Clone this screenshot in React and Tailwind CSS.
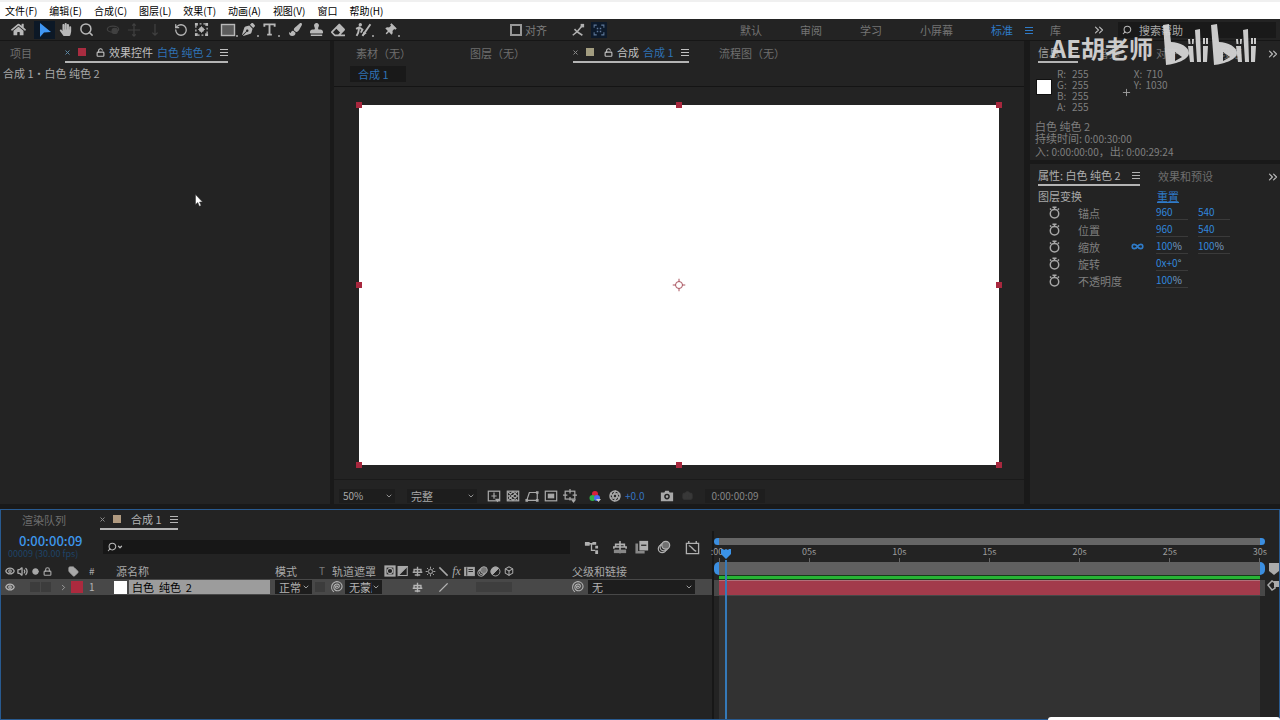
import React from 'react'
import {
  Search, Lock, LockOpen, Eye, Volume2, Circle, Tag, ChevronDown, ChevronRight,
  ChevronsRight, RotateCcw, Aperture, Camera, Box, Plus
} from 'lucide-react'
import { FaHome, FaHandPaper, FaPaintBrush, FaStamp, FaEraser, FaThumbtack, FaPenNib } from 'react-icons/fa'

const menus = ['文件(F)', '编辑(E)', '合成(C)', '图层(L)', '效果(T)', '动画(A)', '视图(V)', '窗口', '帮助(H)']

const workspaces = ['默认', '审阅', '学习', '小屏幕']

const Svg = ({ size = 14, className = '', children }) => (
  <svg
    width={size}
    height={size}
    viewBox="0 0 16 16"
    fill="none"
    stroke="currentColor"
    strokeWidth="1.4"
    className={className}
    aria-hidden="true"
  >
    {children}
  </svg>
)

const ArrowIcon = () => (
  <Svg size={16}><path d="M3 1v14l4-4.5 7-.5z" fill="#3f97f5" stroke="none" /></Svg>
)

const OrbitIcon = () => (
  <Svg>
    <ellipse cx="8" cy="7" rx="6.5" ry="3.5" />
    <circle cx="10" cy="9" r="3" fill="currentColor" />
  </Svg>
)

const MoveIcon = () => (
  <Svg><path d="M8 1v14M1 8h14M6 3l2-2 2 2M6 13l2 2 2-2" /></Svg>
)

const DollyIcon = () => (
  <Svg><path d="M8 1v12M5 11l3 3 3-3" /></Svg>
)

const AnchorIcon = () => (
  <Svg size={15}>
    <rect x="2" y="2" width="12" height="12" strokeDasharray="2 2" />
    <path d="M8 4.500v7M4.500 8h7" strokeWidth="1" />
    <circle cx="8" cy="8" r="2" fill="currentColor" />
    <path d="M1 1h3v3H1zM12 1h3v3h-3zM1 12h3v3H1zM12 12h3v3h-3z" fill="currentColor" stroke="none" />
  </Svg>
)

const RectIcon = () => (
  <Svg size={16}><rect x="1.5" y="2.5" width="13" height="11" fill="#5c5c5c" /></Svg>
)

const TextIcon = () => (
  <Svg size={15}><path d="M2.5 5V2.5h11V5M8 2.5v11M5.5 13.5h5" strokeWidth="2" /></Svg>
)

const RotoIcon = () => (
  <Svg size={17}>
    <circle cx="5" cy="3.5" r="1.6" fill="currentColor" stroke="none" />
    <path d="M1 7.5l3-1.5 3 2-1.5 3M4 6l-1 5-1.5 3M7 14L14.5 3" strokeWidth="1.8" />
    <path d="M7 14l1-4 3 1.5z" fill="currentColor" stroke="none" />
  </Svg>
)

const toolGroups = [
  [{ name: '主页', icon: <FaHome size={15} /> }],
  [
    { name: '选取工具', icon: <ArrowIcon />, active: true },
    { name: '手形工具', icon: <FaHandPaper size={13} /> },
    { name: '缩放工具', icon: <Search size={15} strokeWidth={2.4} /> }
  ],
  [
    { name: '环绕工具', icon: <OrbitIcon />, dim: true },
    { name: '平移工具', icon: <MoveIcon />, dim: true },
    { name: '推拉工具', icon: <DollyIcon />, dim: true }
  ],
  [
    { name: '旋转工具', icon: <RotateCcw size={14} strokeWidth={2.2} /> },
    { name: '锚点工具', icon: <AnchorIcon /> }
  ],
  [
    { name: '矩形工具', icon: <RectIcon />, more: true },
    { name: '钢笔工具', icon: <FaPenNib size={13} />, more: true },
    { name: '文字工具', icon: <TextIcon />, more: true }
  ],
  [
    { name: '画笔工具', icon: <FaPaintBrush size={13} /> },
    { name: '仿制图章工具', icon: <FaStamp size={13} /> },
    { name: '橡皮擦工具', icon: <FaEraser size={14} /> }
  ],
  [{ name: 'Roto 笔刷工具', icon: <RotoIcon />, more: true }],
  [{ name: '人偶位置控点工具', icon: <FaThumbtack size={12} className="rotate-45" />, more: true }]
]

const MenuLines = ({ className = '' }) => (
  <svg width="8" height="8" viewBox="0 0 8 8" stroke="currentColor" className={`shrink-0 ${className}`} aria-hidden="true">
    <path d="M0 1.5h8M0 4.5h8M0 7.5h8" />
  </svg>
)

const PanelTab = ({ className = '', children }) => (
  <button className={`flex h-5 items-center border-b-2 border-[#b4b4b4] whitespace-nowrap ${className}`}>
    {children}
  </button>
)

const CloseMark = ({ className = '' }) => (
  <svg width="5" height="5" viewBox="0 0 5 5" stroke="currentColor" className={`shrink-0 ${className}`} aria-hidden="true">
    <path d="M.500.500l4 4M4.500.500l-4 4" />
  </svg>
)

const IdleTab = ({ className = '', children }) => (
  <button className={`h-5 whitespace-nowrap text-[#6f6f6f] ${className}`}>{children}</button>
)

const MenuBar = () => (
  <nav className="flex h-[19px] shrink-0 items-center gap-3 border-t-2 border-[#f0f0f0] bg-white pl-[5px] text-[10px] text-black">
    {menus.map((menu) => (
      <button key={menu} className="whitespace-nowrap">{menu}</button>
    ))}
  </nav>
)

const Toolbar = () => (
  <div className="flex h-[22px] shrink-0 items-center border-b border-[#161616] bg-[#232323] pl-2">
    <div className="flex gap-[5px]">
      {toolGroups.map((group) => (
        <div key={group[0].name} className="flex">
          {group.map((tool) => (
            <button
              key={tool.name}
              aria-label={tool.name}
              className={`relative flex h-[18px] w-[21px] items-center justify-center ${tool.active ? 'bg-[#0c1826]' : ''} ${tool.dim ? 'text-[#414141]' : 'text-[#b8b8b8]'}`}
            >
              {tool.icon}
              {tool.more && <span className="absolute right-0 bottom-0.5 size-0.5 bg-[#8a8a8a]" />}
            </button>
          ))}
        </div>
      ))}
    </div>
    <label className="ml-[110px] flex items-center gap-[3px] text-[#7d7d7d]">
      <input type="checkbox" className="size-3 appearance-none border-2 border-[#989898]" />
      对齐
    </label>
    <div className="ml-6 flex items-center gap-1.5">
      <button aria-label="对齐边缘" className="text-[#b0b0b0]">
        <Svg>
          <path d="M2 14l5-4 6 4M7 10L4 7M7 10l5-6" strokeWidth="1.800" />
          <path d="M11 1h4v4h-4z" fill="currentColor" stroke="none" />
        </Svg>
      </button>
      <button aria-label="对齐折叠" className="flex size-4 items-center justify-center bg-[#0d1a2b] text-[#5f7899]">
        <Svg size={12}>
          <path d="M1.500 5V1.500H5M11 1.500h3.500V5M14.500 11v3.500H11M5 14.500H1.500V11" />
          <path d="M5 5h2v2H5zM9 5h2v2H9zM5 9h2v2H5zM9 9h2v2H9z" fill="currentColor" stroke="none" />
        </Svg>
      </button>
    </div>
    <div className="ml-auto flex items-center text-[#747474]">
      <div className="flex items-center gap-[38px]">
        {workspaces.map((name) => (
          <button key={name}>{name}</button>
        ))}
        <button className="flex items-center gap-3 text-[#2f7bc8]">
          标准
          <MenuLines />
        </button>
      </div>
      <button className="ml-[17px]">库</button>
      <button aria-label="更多工作区" className="ml-[31px] text-[#b8b8b8]">
        <ChevronsRight size={14} />
      </button>
      <label className="mr-1 ml-3 flex h-4 w-[158px] items-center gap-[7px] bg-[#191919] px-1">
        <Search size={10} strokeWidth={2.5} className="shrink-0 -scale-x-100 text-[#b8b8b8]" />
        <input
          aria-label="搜索帮助"
          placeholder="搜索帮助"
          className="w-full min-w-0 bg-transparent placeholder:text-[#a8a8a8] focus:outline-none"
        />
      </label>
    </div>
  </div>
)

const EffectControls = () => (
  <section className="relative w-[330px] shrink-0 bg-[#232323]">
    <div className="flex h-[23px] items-start pt-0.5 pl-2.5">
      <IdleTab>项目</IdleTab>
      <PanelTab className="ml-[33px] w-[163px] text-[#c0c0c0]">
        <CloseMark className="text-[#5b87a5]" />
        <span className="ml-2 size-2 shrink-0 bg-[#a82c40]" />
        <LockOpen size={9} strokeWidth={3} className="mr-1 ml-2.5 shrink-0" />
        效果控件
        <span className="ml-1 text-[#2f72b4]">白色 纯色 2</span>
        <MenuLines className="ml-auto" />
      </PanelTab>
    </div>
    <p className="pl-[3px] leading-[18px] text-[#a8a8a8]">合成 1・白色 纯色 2</p>
    {/* mouse pointer */}
    <svg width="8" height="13" viewBox="0 0 8 13" className="absolute top-[153px] left-[195px]" aria-hidden="true">
      <path d="M.5.5v10l2.300-2 1.500 3.800 1.800-.8-1.600-3.500H7.500z" fill="#fff" stroke="#333" strokeWidth=".5" />
    </svg>
  </section>
)

const handles = [
  '-top-[3px] -left-[3px]',
  '-top-[3px] left-1/2 -translate-x-1/2',
  '-top-[3px] -right-[3px]',
  'top-1/2 -left-[3px] -translate-y-1/2',
  'top-1/2 -right-[3px] -translate-y-1/2',
  '-bottom-[3px] -left-[3px]',
  '-bottom-[3px] left-1/2 -translate-x-1/2',
  '-bottom-[3px] -right-[3px]'
]

const viewIcons = [
  { name: '快速预览', path: <><rect x="1.500" y="2.500" width="13" height="11" /><path d="M8 4v7M5 8h6" /><path d="M9 11h6l-3 4z" fill="currentColor" stroke="none" /></> },
  { name: '透明网格', path: <><rect x="1.500" y="2.500" width="13" height="11" /><path d="M2 3l11 10M13 3L2 13M8 3l5 5-5 5-5-5z" /></> },
  { name: '蒙版可见性', path: <><path d="M2 13L5 4h9v9z" /><path d="M.500 11.500h3v3h-3zM12.500 11.500h3v3h-3zM12.500 2.500h3v3h-3z" fill="currentColor" stroke="none" /></> },
  { name: '目标区域', path: <><rect x="1.500" y="2.500" width="13" height="11" /><rect x="5" y="6" width="6" height="4" fill="currentColor" /></> },
  { name: '网格和参考线', path: <><rect x="2.500" y="2.500" width="11" height="9" /><path d="M8 0v5M8 9v4M0 7h5M11 7h5" /><path d="M9 12h6l-3 4z" fill="currentColor" stroke="none" /></> }
]

const SelectBox = ({ label, value, className = '' }) => (
  <div className={`relative flex items-center bg-[#1d1d1d] ${className}`}>
    <select aria-label={label} className="w-full appearance-none overflow-hidden bg-transparent pr-2.5 pl-1 leading-[14px] focus:outline-none">
      <option>{value}</option>
    </select>
    <ChevronDown size={8} strokeWidth={2.5} className="pointer-events-none absolute right-0.5" />
  </div>
)

const Viewer = () => (
  <section className="flex min-w-0 flex-1 flex-col bg-[#232323]">
    <div className="flex h-[23px] items-start pt-0.5 pl-[22px]">
      <IdleTab>素材（无）</IdleTab>
      <IdleTab className="ml-[59px]">图层（无）</IdleTab>
      <PanelTab className="ml-12 w-[116px] text-[#c0c0c0]">
        <CloseMark className="text-[#8a8a8a]" />
        <span className="ml-2 size-2 shrink-0 bg-[#a39d80]" />
        <LockOpen size={9} strokeWidth={3} className="mr-1 ml-2.5 shrink-0" />
        合成
        <span className="ml-1 text-[#2f72b4]">合成 1</span>
        <MenuLines className="ml-auto" />
      </PanelTab>
      <IdleTab className="ml-[30px]">流程图（无）</IdleTab>
    </div>
    <div className="h-[23px] border-b border-[#141414] pt-0.5 pl-4">
      <button className="block h-4 w-14 bg-[#191919] pl-2 text-left leading-4 text-[#2f72b4]">合成 1</button>
    </div>
    <div className="px-[25px] pt-[18px] pb-3.5">
      <div className="relative aspect-video bg-white">
        {handles.map((pos) => (
          <span key={pos} className={`absolute size-1.5 bg-[#a8283e] ${pos}`} />
        ))}
        <svg
          width="13"
          height="13"
          viewBox="0 0 13 13"
          fill="none"
          stroke="#a8505c"
          className="absolute top-1/2 left-1/2 -translate-x-1/2 -translate-y-1/2"
          aria-hidden="true"
        >
          <circle cx="6.500" cy="6.500" r="3.500" />
          <path d="M6.500 0v3M6.500 10v3M0 6.500h3M10 6.500h3" />
        </svg>
      </div>
    </div>
    <div className="flex h-[25px] items-center border-t border-[#1a1a1a] pt-[7px] pl-[5px] text-[#a8a8a8]">
      <SelectBox label="放大率" value="50%" className="w-14 text-[10px]" />
      <SelectBox label="分辨率" value="完整" className="ml-3 w-[70px]" />
      <div className="ml-2.5 flex gap-[5px]">
        {viewIcons.map((icon) => (
          <button key={icon.name} aria-label={icon.name}><Svg size={14}>{icon.path}</Svg></button>
        ))}
      </div>
      <button aria-label="通道" className="ml-3">
        <svg width="12" height="12" viewBox="0 0 12 12" aria-hidden="true">
          <circle cx="6" cy="4" r="3" fill="#d8203c" />
          <circle cx="3.500" cy="8" r="3" fill="#30b048" />
          <circle cx="8" cy="8" r="3" fill="#4a6cf0" />
          <path d="M7 9h5l-2.500 3z" fill="#ccc" />
        </svg>
      </button>
      <button aria-label="重置曝光度" className="ml-2"><Aperture size={12} strokeWidth={3} /></button>
      <button className="ml-1 text-[10px] text-[#3573c0]">+0.0</button>
      <button aria-label="拍摄快照" className="ml-4">
        <Svg size={14}>
          <path fillRule="evenodd" d="M1 4h4l1-2h4l1 2h4v10H1zM8 5.500a3.200 3.200 0 100 6.400 3.200 3.200 0 000-6.400zM8 7.200a1.500 1.500 0 110 3 1.500 1.500 0 010-3z" fill="currentColor" stroke="none" />
        </Svg>
      </button>
      <button aria-label="显示快照" className="ml-2 text-[#383838]"><Camera size={11} fill="currentColor" /></button>
      <button className="ml-3 bg-[#1e1e1e] px-1.5 text-[10px] leading-[14px] text-[#868686]">0:00:00:09</button>
    </div>
  </section>
)

const channels = [
  ['R', '255'],
  ['G', '255'],
  ['B', '255'],
  ['A', '255']
]

const InfoPanel = () => (
  <section className="h-[119px] bg-[#232323]">
    <div className="flex h-[23px] items-start pt-0.5 pl-2 text-[#6f6f6f]">
      <PanelTab className="w-10 text-[#a0a0a0]">
        信息
        <MenuLines className="ml-auto" />
      </PanelTab>
      <IdleTab className="ml-5">音频</IdleTab>
      <IdleTab className="ml-9">对齐</IdleTab>
      <IdleTab className="ml-auto">段落</IdleTab>
      <button aria-label="更多面板" className="mt-1 ml-6 text-[#b8b8b8]"><ChevronsRight size={14} /></button>
    </div>
    <div className="flex pl-1.5 text-[10px] leading-[11px] text-[#7f7f7f]">
      <span className="mt-[15px] size-4 border border-[#111] bg-white" />
      <dl className="mt-1 ml-[5px]">
        {channels.map(([name, value]) => (
          <div key={name} className="flex">
            <dt className="w-[15px]">{name}:</dt>
            <dd>{value}</dd>
          </div>
        ))}
      </dl>
      <Plus size={11} strokeWidth={2} className="mt-[23px] ml-8 text-[#a0a0a0]" />
      <dl className="mt-1 ml-0.5">
        <div className="flex gap-1"><dt>X:</dt><dd>710</dd></div>
        <div className="flex gap-1"><dt>Y:</dt><dd>1030</dd></div>
      </dl>
    </div>
    <div className="pt-2 pl-[5px] text-[#7f7f7f]">
      <p className="leading-3">白色 纯色 2</p>
      <p className="leading-3">持续时间: <span className="text-[10px]">0:00:30:00</span></p>
      <p className="leading-3">入: <span className="text-[10px]">0:00:00:00</span>，出: <span className="text-[10px]">0:00:29:24</span></p>
    </div>
  </section>
)

const transforms = [
  { name: '锚点', values: ['960', '540'] },
  { name: '位置', values: ['960', '540'] },
  { name: '缩放', values: ['100', '100'], unit: '%', linked: true },
  { name: '旋转', values: ['0x+0'], unit: '°' },
  { name: '不透明度', values: ['100'], unit: '%' }
]

const Stopwatch = () => (
  <Svg size={13}>
    <circle cx="8" cy="9.500" r="5.200" strokeWidth="1.800" />
    <path d="M8 4V1.500M5.500 1.500h5M12 4.500l1.500-1.500M4 4.500L2.500 3" strokeWidth="1.800" />
  </Svg>
)

const PropertiesPanel = () => (
  <section className="flex-1 bg-[#232323]">
    <div className="flex h-[23px] items-start pt-0.5 pl-2">
      <PanelTab className="w-[102px] text-[#b0b0b0]">
        属性: 白色 纯色 2
        <MenuLines className="ml-auto" />
      </PanelTab>
      <IdleTab className="ml-[18px]">效果和预设</IdleTab>
      <button aria-label="更多面板" className="mt-1 ml-auto text-[#b8b8b8]"><ChevronsRight size={14} /></button>
    </div>
    <div className="flex h-[17px] items-center pl-2 text-[#a8a8a8]">
      <h2 className="w-[119px]">图层变换</h2>
      <button className="text-[#2f7bc8] underline">重置</button>
    </div>
    {transforms.map((row) => (
      <div key={row.name} className="flex h-[17px] items-center pl-[18px] text-[#7f7f7f]">
        <button aria-label={`${row.name}关键帧`} className="text-[#a8a8a8]"><Stopwatch /></button>
        <span className="ml-[17px] w-[53px]">{row.name}</span>
        <span className="flex w-[25px] text-[#2f7bc8]">
          {row.linked && (
            <Svg size={13}><path d="M8 8C6 4.500 1.500 4.500 1.500 8S6 11.500 8 8s6.500-3.500 6.500 0S10 11.500 8 8z" strokeWidth="2" /></Svg>
          )}
        </span>
        {row.values.map((value, i) => (
          <button key={i} className="mr-2.5 w-8 border-b border-[#3a3a3a] text-left text-[10px] leading-[14px] text-[#3186dc]">
            {value}
            <span className="text-[#7da0c0]">{row.unit}</span>
          </button>
        ))}
      </div>
    ))}
  </section>
)

const switchIcons = [
  { name: '消隐', path: <path d="M1 9h14M3 9V5h10v4M8 1v14M4 13h8" strokeWidth="2" /> },
  { name: '折叠变换', path: <><circle cx="8" cy="8" r="3" /><path d="M8 1v3M8 12v3M1 8h3M12 8h3M3 3l2 2M13 13l-2-2M13 3l-2 2M3 13l2-2" /></> },
  { name: '质量和采样', path: <path d="M2 2l12 12" strokeWidth="2.200" /> },
  { name: '效果', text: 'fx' },
  { name: '帧混合', path: <><rect x="1" y="2" width="14" height="12" fill="currentColor" /><path d="M4 2v12M6.500 8H13M6.500 5H13" stroke="#232323" /></> },
  { name: '运动模糊', path: <><circle cx="6" cy="10" r="5" /><circle cx="8" cy="8" r="5" /><circle cx="10" cy="6" r="5" fill="#777" /></> },
  { name: '调整图层', path: <><circle cx="8" cy="8" r="6.500" /><path d="M3.400 12.600A6.500 6.500 0 0112.600 3.400z" fill="currentColor" /></> },
  { name: '3D 图层', box: true }
]

const Spiral = () => (
  <Svg size={12} className="shrink-0"><path d="M9 8a1.500 1.500 0 10-1.500 1.800C10 9.800 11.500 8 11 6S7.500 3.500 5.500 5 3 10 5.500 12s7 1 8.500-2 .5-7-3-8.500-8-.5-9.500 3.500 0 8 2.500 9.500" /></Svg>
)

const LayerTable = () => (
  <table className="w-full table-fixed border-collapse text-left">
    <colgroup>
      <col className="w-[56px]" />
      <col className="w-[28px]" />
      <col className="w-[28px]" />
      <col className="w-[157px]" />
      <col className="w-[43px]" />
      <col className="w-[16px]" />
      <col className="w-[55px]" />
      <col className="w-[28px]" />
      <col className="w-[158px]" />
      <col />
    </colgroup>
    <thead className="text-[#a8a8a8]">
      <tr className="h-4 leading-4">
        <th className="p-0">
          <span className="flex items-center gap-0.5 pl-1">
            <Eye size={10} strokeWidth={3} />
            <Volume2 size={11} strokeWidth={3} />
            <Circle size={7} fill="currentColor" className="mx-0.5" />
            <Lock size={9} strokeWidth={3} />
          </span>
        </th>
        <th className="p-0 pl-[11px]"><Tag size={11} fill="currentColor" /></th>
        <th className="p-0 pl-1 text-[10px] font-normal">#</th>
        <th className="p-0 pl-[3px] font-normal">源名称</th>
        <th className="p-0 pl-[5px] font-normal">模式</th>
        <th className="p-0 pl-1.5 text-[10px] font-normal text-[#7a7a7a]">T</th>
        <th className="p-0 pl-[3px] font-normal whitespace-nowrap">轨道遮罩</th>
        <th className="p-0">
          <span className="flex">
            <Svg size={12}><rect x="2" y="2" width="12" height="12" strokeWidth="3" /><circle cx="8" cy="8" r="3.500" fill="#232323" stroke="currentColor" /></Svg>
            <Svg size={12}><rect x="3" y="2" width="12" height="12" /><path d="M3 2h12l-4 4-4 4-4 4z" fill="currentColor" /></Svg>
          </span>
        </th>
        <th className="p-0">
          <span className="flex items-center gap-0.5">
            {switchIcons.map((icon) => (
              <span key={icon.name} title={icon.name} className="flex w-[11px] justify-center">
                {icon.text && <span className="font-['Liberation_Serif',serif] text-xs leading-3 font-normal italic">{icon.text}</span>}
                {icon.box && <Box size={10} strokeWidth={2.500} />}
                {icon.path && <Svg size={11} className="shrink-0">{icon.path}</Svg>}
              </span>
            ))}
          </span>
        </th>
        <th className="p-0 pl-0.5 font-normal">父级和链接</th>
      </tr>
    </thead>
    <tbody>
      <tr className="h-4 bg-[#484848] leading-4 text-[#b4b4b4]">
        <td className="p-0">
          <span className="flex items-center gap-px pl-1">
            <Eye size={10} strokeWidth={3} />
            <span className="ml-3.5 h-2.5 w-2.5 bg-[#3c3c3c]" />
            <span className="h-2.5 w-2.5 bg-[#3c3c3c]" />
          </span>
        </td>
        <td className="p-0">
          <span className="flex items-center">
            <ChevronRight size={9} className="mx-0.5" />
            <span className="ml-px size-3 bg-[#ac2a3e]" />
          </span>
        </td>
        <td className="p-0 pl-1 text-[10px]">1</td>
        <td className="p-0">
          <span className="flex items-center">
            <span className="mr-0.5 ml-px size-[13px] bg-white" />
            <button className="h-[14px] flex-1 bg-[#9c9c9c] pl-[3px] text-left leading-[14px] text-black">白色&nbsp; 纯色&nbsp; 2</button>
          </span>
        </td>
        <td className="p-0 pl-[5px]"><SelectBox label="模式" value="正常" className="w-[37px]" /></td>
        <td className="p-0"><span className="ml-0.5 block h-2.5 w-2.5 bg-[#3c3c3c]" /></td>
        <td className="p-0">
          <span className="flex items-center justify-end gap-0.5 pr-0.5">
            <Spiral />
            <SelectBox label="轨道遮罩" value="无蒙版" className="w-[37px]" />
          </span>
        </td>
        <td className="p-0" />
        <td className="p-0">
          <span className="flex items-center">
            <Svg size={11}>{switchIcons[0].path}</Svg>
            <Svg size={11} className="ml-[15px]"><path d="M2 14L14 2" strokeWidth="2" /></Svg>
            <span className="ml-[27px] h-2.5 w-9 bg-[#3e3e3e]" />
          </span>
        </td>
        <td className="p-0">
          <span className="flex items-center gap-1 pl-0.5">
            <Spiral />
            <SelectBox label="父级和链接" value="无" className="mr-[17px] flex-1" />
          </span>
        </td>
      </tr>
    </tbody>
  </table>
)

const ticks = [':00s', '05s', '10s', '15s', '20s', '25s', '30s']

const duration = 30
const currentTime = 0.4

const TimeGraph = () => (
  <div className="flex min-w-0 flex-1 border-l-2 border-[#171717]">
    <div className="relative flex min-w-0 flex-1 flex-col pt-[7px]">
      {/* time navigator */}
      <div className="flex h-[7px]">
        <span className="w-[5px] rounded-l-full bg-[#3b8ee0]" />
        <span className="flex-1 bg-[#666]" />
        <span className="w-[5px] rounded-r-full bg-[#3b8ee0]" />
      </div>
      <div className="flex h-[17px] justify-between px-[5px] text-[9px] text-[#9c9c9c]">
        {ticks.map((tick) => (
          <span key={tick} className="flex w-0 flex-col items-center leading-[13px]">
            <span>{tick}</span>
            <span className="h-1 w-px shrink-0 bg-[#666]" />
          </span>
        ))}
      </div>
      {/* work area */}
      <div className="flex h-[13px]">
        <span className="w-[5px] rounded-l-full bg-[#3b8ee0]" />
        <span className="flex-1 bg-[#606060]" />
        <span className="w-[5px] rounded-r-full bg-[#3b8ee0]" />
      </div>
      <div className="mx-[5px] border-t border-b border-[#173b1a]">
        <div className="h-[3px] bg-[#27b535]" />
      </div>
      <div className="bg-[#484848] px-[5px] pb-px">
        <div className="h-[15px] border-t border-[#b0707a] bg-[#a23b4b]" />
      </div>
      <div className="mx-[5px] flex-1 bg-[#323232]" />
      {/* current time indicator */}
      <div className="pointer-events-none absolute inset-x-[5px] top-[17px] bottom-0">
        <div
          className="absolute inset-y-0 flex w-3 -translate-x-1/2 flex-col items-center"
          style={{ left: `${(currentTime / duration) * 100}%` }}
        >
          <svg width="12" height="12" viewBox="0 0 12 12" className="shrink-0" aria-hidden="true">
            <path d="M1 1h2l1 1 2-1 2 1 1-1h2v5l-5 5-5-5z" fill="#3b93e8" />
          </svg>
          <span className="w-0.5 flex-1 bg-[#3579b8]" />
        </div>
      </div>
    </div>
    <div className="flex w-3.5 shrink-0 flex-col items-end gap-1 pt-[31px] text-[#ababab]">
      <button aria-label="合成标记">
        <svg width="10" height="13" viewBox="0 0 10 13" aria-hidden="true"><path d="M0 1h10v8l-5 4-5-4z" fill="currentColor" /></svg>
      </button>
      <button aria-label="合成按钮">
        <svg width="12" height="12" viewBox="0 0 12 12" fill="none" stroke="currentColor" strokeWidth="1.500" aria-hidden="true">
          <path d="M1 6l4-4 3 2v5L5 11z" />
          <path d="M7 2h5v6H7z" fill="currentColor" stroke="none" />
        </svg>
      </button>
    </div>
  </div>
)

const Timeline = () => (
  <section className="flex flex-1 flex-col border border-[#285a90] bg-[#232323]">
    <div className="flex h-[21px] shrink-0 items-start pl-[21px]">
      <IdleTab>渲染队列</IdleTab>
      <PanelTab className="ml-[34px] w-[78px] text-[#b4b4b4]">
        <CloseMark className="text-[#8a8a8a]" />
        <span className="ml-2 size-2 shrink-0 bg-[#b09a80]" />
        <span className="ml-2.5">合成 1</span>
        <MenuLines className="ml-auto" />
      </PanelTab>
    </div>
    <div className="flex flex-1">
      <div className="w-[711px] shrink-0">
        <div className="flex h-8 items-center pr-3">
          <div className="w-[102px] pl-[7px]">
            <button className="block pl-[11px] text-[13px] leading-[14px] font-medium text-[#3d97ec]">0:00:00:09</button>
            <p className="text-[9px] leading-3 whitespace-nowrap text-[#1e4468]">00009 (30.00 fps)</p>
          </div>
          <label className="flex h-3.5 flex-1 items-center bg-[#171717] pl-1 text-[#b8b8b8]">
            <Search size={10} strokeWidth={2.500} className="-scale-x-100" />
            <ChevronDown size={6} strokeWidth={5} />
            <input aria-label="搜索图层" className="min-w-0 flex-1 bg-transparent focus:outline-none" />
          </label>
          <div className="ml-3.5 flex items-center text-[#b0b0b0]">
            <button aria-label="合成微型流程图">
              <Svg size={15}><path d="M1 4h5M6 4h4M8 4v7h4" /><path d="M1 2h5v4H1zM9 2h4v3H9zM12 6h3v3h-3zM12 11h3v4h-3z" fill="currentColor" stroke="none" /></Svg>
            </button>
            <button aria-label="隐藏消隐图层" className="ml-3.5">
              <Svg size={14}><path d="M1 10V8h14v2M3 8V5h10v3M8 1v14" strokeWidth="1.800" /><path d="M1 11h14v4H1z" fill="#888" stroke="none" /></Svg>
            </button>
            <button aria-label="启用帧混合" className="ml-2">
              <Svg size={14}><path d="M2 4v10h9" strokeWidth="3" stroke="#888" /><rect x="5" y="1" width="10" height="11" fill="currentColor" stroke="none" /><path d="M7 6h6" stroke="#232323" /></Svg>
            </button>
            <button aria-label="启用运动模糊" className="ml-2">
              <Svg size={14}><circle cx="6" cy="10" r="4.500" /><circle cx="8" cy="8" r="4.500" /><circle cx="10" cy="6" r="4.500" fill="#707070" /></Svg>
            </button>
            <button aria-label="图表编辑器" className="ml-3.5">
              <Svg size={15}><path d="M1.500 3.500h13v11h-13zM4 6c3 0 4 5 8 6M4 1v3M12 1v3" /></Svg>
            </button>
          </div>
        </div>
        <LayerTable />
      </div>
      <TimeGraph />
    </div>
  </section>
)

const LogoHalf = () => (
  <>
    <path fillRule="evenodd" d="M0 3l6-1 2 18c9 0 18 5 18 11 0 6-12 11-23 12zM12 30v9l7-4z" />
    <path d="M25 24h5l1 16h-4zM25 17h2l.500 5h-2zM29 17h2l-.500 5h-1.500z" />
    <path d="M32 8l5-1 1 33h-4z" />
    <path d="M40 24h5l-1 16h-4zM40 16h2v6h-2zM43 16h2v6h-2z" />
  </>
)

const Watermark = () => (
  <div className="pointer-events-none absolute top-[22px] right-[23px] flex items-center text-[#d4d4d4] opacity-95">
    <span className="mt-2 text-2xl leading-8 font-bold whitespace-nowrap">AE胡老师</span>
    <svg width="94" height="44" viewBox="0 0 94 44" fill="currentColor" className="ml-2.5" role="img" aria-label="bilibili">
      <LogoHalf />
      <g transform="translate(48 0)"><LogoHalf /></g>
    </svg>
  </div>
)

const App = () => {
  return (
    <div className="relative flex min-h-screen flex-col overflow-hidden bg-[#191919] font-['Noto_Sans_CJK_SC','Noto_Sans',sans-serif] text-[11px] leading-4">
      <MenuBar />
      <Toolbar />
      <main className="flex gap-1 pb-[5px]">
        <EffectControls />
        <Viewer />
        <aside className="ml-0.5 flex w-[250px] shrink-0 flex-col gap-1">
          <InfoPanel />
          <PropertiesPanel />
        </aside>
      </main>
      <Timeline />
      <Watermark />
      <div className="absolute right-0 bottom-0 h-[3px] w-[232px] rounded-t bg-white" />
    </div>
  )
}

export default App
